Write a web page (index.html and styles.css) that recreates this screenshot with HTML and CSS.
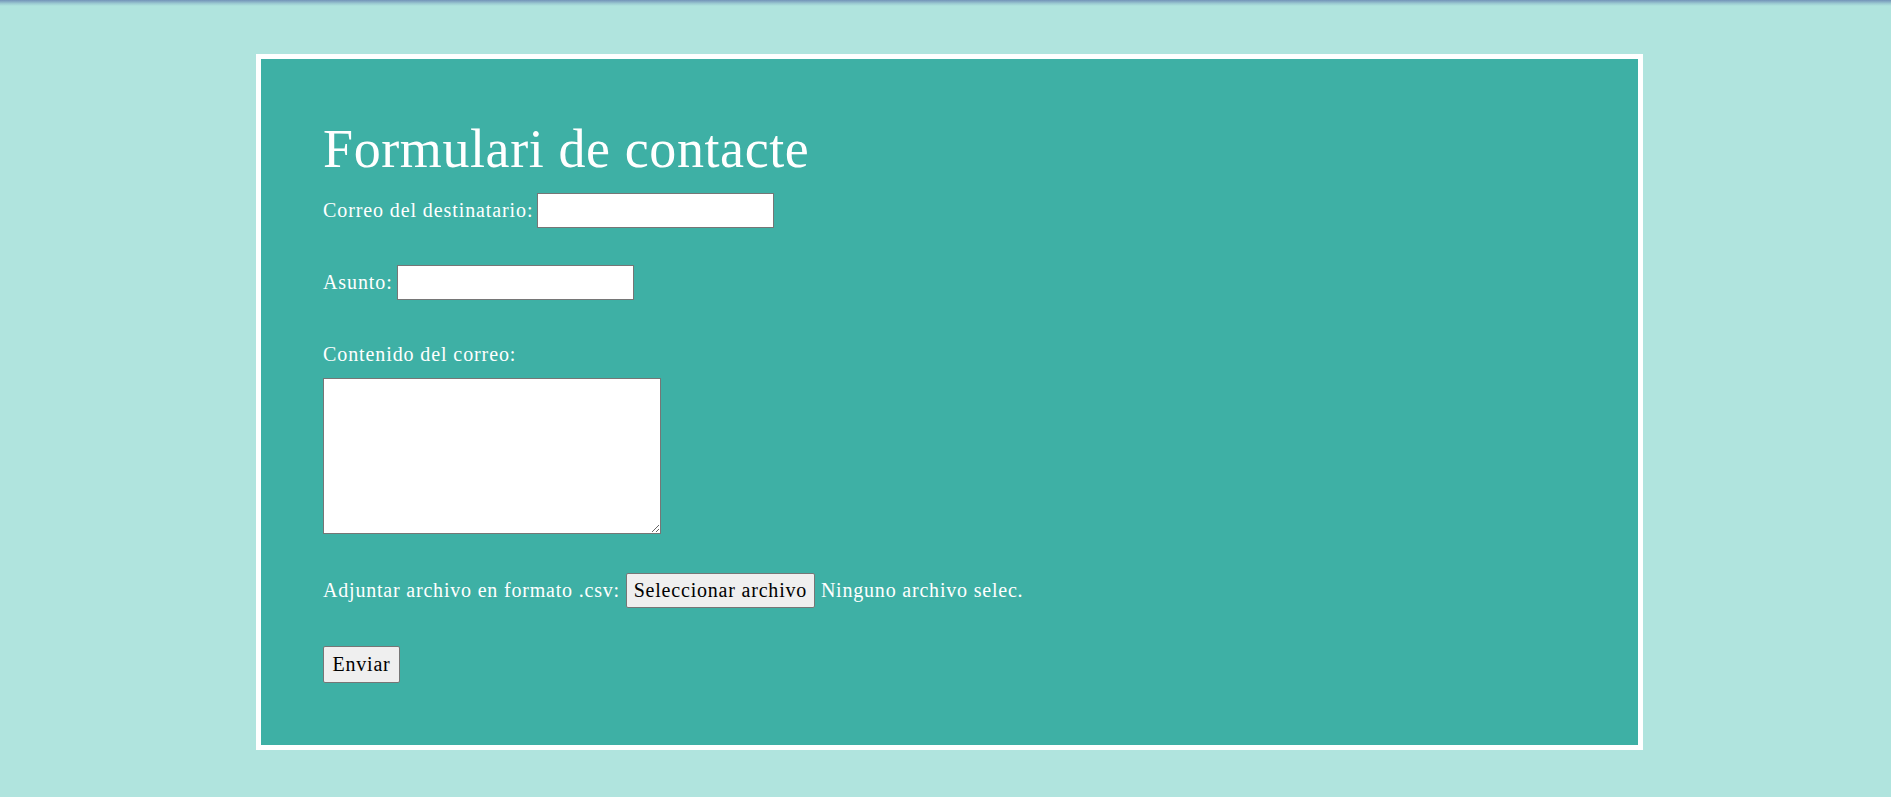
FILE: index.html
```html
<!DOCTYPE html>
<html lang="ca">
<head>
<meta charset="utf-8">
<title>Formulari de contacte</title>
<link rel="stylesheet" href="styles.css">
</head>
<body>
<div class="topbar"></div>
<main class="card">
  <h1 class="title">Formulari de contacte</h1>
  <form class="form" action="#" onsubmit="return false;">
    <div class="row row-first">
      <label class="label" for="to">Correo del destinatario:</label>
      <input class="field" id="to" type="email">
    </div>
    <div class="row row-subject">
      <label class="label" for="subject">Asunto:</label>
      <input class="field" id="subject" type="text">
    </div>
    <label class="label label-block" for="body">Contenido del correo:</label>
    <textarea class="area" id="body"></textarea>
    <div class="row row-file">
      <span class="label label-tight">Adjuntar archivo en formato .csv:</span>
      <button class="btn btn-file" type="button">Seleccionar archivo</button>
      <span class="label label-tight">Ninguno archivo selec.</span>
    </div>
    <div class="row row-submit">
      <button class="btn btn-send" type="submit">Enviar</button>
    </div>
  </form>
</main>
</body>
</html>
```

FILE: styles.css
```css
html, body {
  margin: 0;
  padding: 0;
}

body {
  background: #b0e4de;
  font-family: "Liberation Serif", "Times New Roman", serif;
  color: #ffffff;
  min-height: 797px;
}

.topbar {
  height: 6px;
  background: linear-gradient(#7393b8, #9ccbd2 60%, #b0e4de);
}

.card {
  box-sizing: border-box;
  width: 1387px;
  margin: 48px 0 0 256px;
  border: 5px solid #ffffff;
  background: #3eb0a5;
  padding: 63px 62px 62px;
}

.title {
  margin: 0;
  font-weight: normal;
  font-size: 54px;
  line-height: 54px;
  letter-spacing: 0.6px;
}

.form {
  display: flex;
  flex-direction: column;
  align-items: flex-start;
}

.row {
  display: flex;
  align-items: center;
  gap: 4px;
  height: 35px;
}

.row-first {
  margin-top: 17px;
}

.row-subject {
  margin-top: 37px;
}

.label {
  font-size: 20px;
  line-height: 35px;
  letter-spacing: 0.9px;
  white-space: nowrap;
}

.label-tight {
  letter-spacing: 0.8px;
}

.label-block {
  display: block;
  margin-top: 42px;
  line-height: 24px;
}

.field {
  box-sizing: border-box;
  width: 237px;
  height: 35px;
  margin: 0;
  border: 1px solid #767676;
  border-radius: 0;
  background: #ffffff;
  padding: 2px 4px;
  font-family: inherit;
  font-size: 18px;
}

.area {
  box-sizing: border-box;
  display: block;
  width: 338px;
  height: 156px;
  margin: 12px 0 0;
  border: 1px solid #767676;
  border-radius: 0;
  background: #ffffff;
  padding: 2px;
}

.row-file {
  margin-top: 39px;
}

.row-submit {
  margin-top: 38px;
  height: 37px;
}

.btn {
  box-sizing: border-box;
  margin: 0;
  padding: 0;
  border: 1px solid #767676;
  border-radius: 2px;
  background: #efefef;
  color: #000000;
  font-family: inherit;
  font-size: 20px;
  letter-spacing: 0.8px;
  white-space: nowrap;
}

.btn-file {
  width: 189px;
  height: 35px;
  margin: 0 2px 0 2px;
}

.btn-send {
  width: 77px;
  height: 37px;
}
```
